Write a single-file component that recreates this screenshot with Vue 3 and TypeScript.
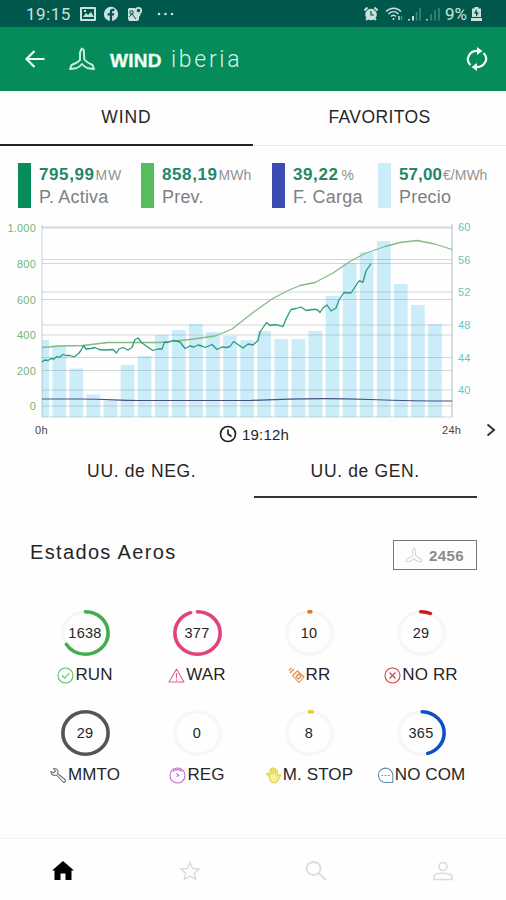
<script setup lang="ts">
interface Metric { value: string; unit: string; label: string; tone: string }
interface State { value: number; label: string; icon: string; color: string; from: number; share: number }

const metrics: Metric[] = [
  { value: '795,99', unit: 'MW', label: 'P. Activa', tone: 'active' },
  { value: '858,19', unit: 'MWh', label: 'Prev.', tone: 'forecast' },
  { value: '39,22', unit: '%', label: 'F. Carga', tone: 'load' },
  { value: '57,00', unit: '€/MWh', label: 'Precio', tone: 'price' },
]

const leftAxis = [
  { y: 228, text: '1.000' }, { y: 263.5, text: '800' }, { y: 299.5, text: '600' },
  { y: 335, text: '400' }, { y: 370.5, text: '200' }, { y: 406, text: '0' },
]
const rightAxis = [
  { y: 227, text: '60' }, { y: 259.5, text: '56' }, { y: 292, text: '52' },
  { y: 325, text: '48' }, { y: 357.5, text: '44' }, { y: 390, text: '40' },
]

const tops = [340, 345, 368.5, 394.5, 401, 365, 356, 335, 330, 324, 332, 336, 340, 331, 339, 339, 331, 296, 263, 252, 241, 284, 305, 324]
const bars = tops.map((y, i) => {
  const x = Math.max(42, 35.3 + i * 17.08)
  return { x, y, w: 49 + i * 17.08 - x, h: 417 - y }
})

// "from" and "share" are percentages of the ring, clockwise from twelve o'clock.
const states: State[] = [
  { value: 1638, label: 'RUN', icon: 'check', color: '#43ae50', from: 0, share: 66 },
  { value: 377, label: 'WAR', icon: 'warning', color: '#e0437c', from: 0, share: 95 },
  { value: 10, label: 'RR', icon: 'remote', color: '#db7422', from: -0.4, share: 1.4 },
  { value: 29, label: 'NO RR', icon: 'cross', color: '#c4201f', from: -0.5, share: 7 },
  { value: 29, label: 'MMTO', icon: 'wrench', color: '#555555', from: 0, share: 100 },
  { value: 0, label: 'REG', icon: 'gauge', color: '#b455c2', from: 0, share: 0 },
  { value: 8, label: 'M. STOP', icon: 'hand', color: '#e3cd29', from: 0, share: 2 },
  { value: 365, label: 'NO COM', icon: 'chat', color: '#0d4fc4', from: 0.5, share: 45 },
]
</script>

<template>
  <main class="screen">
    <div class="status">
      <span class="clock">19:15</span>
      <svg class="st-left" width="82" height="16" viewBox="0 0 82 16">
        <path fill-rule="evenodd" fill="#c9e2dc" d="M1 1h14a1 1 0 0 1 1 1v12a1 1 0 0 1-1 1H1a1 1 0 0 1-1-1V2a1 1 0 0 1 1-1zM2 3v10h12V3zM3 11l3-4 2 2 3-3 3 5zM4 4h2v2H4z" />
        <circle cx="31" cy="8" r="7.2" fill="#c9e2dc" />
        <path fill="#00574b" d="M29.8 15.4V9.6h-2.2V7.3h2.2V5.8c0-2 1.100-3.100 3-3.100h1.600v2.200h-1.200c-.8 0-1.100.4-1.100 1.100v1.300h2.200l-.4 2.300h-1.800v5.800z" />
        <path fill="#c9e2dc" d="M49 2h6l1 4 3 3v5l-2 1h-8l-1-2V3z" />
        <path stroke="#00574b" stroke-width="1" fill="none" d="M49 11l3-3 4 5M50 5h3v3h-3z" />
        <circle cx="58.500" cy="4.500" r="2.700" fill="#00574b" stroke="#c9e2dc" stroke-width="1.800" />
        <path fill="#c9e2dc" d="M56 8h5l-2.500 4z" />
      </svg>
      <svg class="dots" width="18" height="4" viewBox="0 0 18 4"><g fill="#c9e2dc"><circle cx="2" cy="2" r="1.300" /><circle cx="8.500" cy="2" r="1.300" /><circle cx="15" cy="2" r="1.300" /></g></svg>
      <span class="spacer" />
      <svg class="st-right" width="78" height="16" viewBox="0 0 78 16" fill="none" stroke="#c9e2dc">
        <circle cx="8" cy="8.500" r="5.300" fill="#c9e2dc" />
        <path stroke-width="2" d="M1.500 4.500l3-3M14.500 4.500l-3-3M3 14l2-2M13 14l-2-2" />
        <path stroke="#00574b" stroke-width="1.200" d="M8 5v4h3" />
        <path stroke-width="1.500" d="M23 5.500c4.500-4.500 11-4.500 15 0M25.500 8c3-3 7-3 10 0M28 10.500c1.700-1.700 3.300-1.700 5 0" />
        <path stroke-width="1.500" d="M36 10v4M30.500 12v2" />
        <path stroke-width="1.500" opacity=".4" d="M38.500 10v4" />
        <path stroke-width="2" d="M46 13v1.500M50 10v4.500" />
        <path stroke-width="1.500" opacity=".35" d="M53.500 6v8.500M57 2v12.500M68 8v6.500M72 4v10.500M76 2v12.500" />
        <path stroke-width="2" opacity=".8" d="M64 13v1.500" />
      </svg>
      <span class="battery">9%</span>
      <svg width="11" height="14" viewBox="0 0 11 14"><path fill="#c9e2dc" d="M3.500 0h4v1.500H10V10H1V1.500h2.500zM0 11h11v3H0z" /><path fill="#00574b" d="M5.500 2L3 6.500h2V10l3-4.500H6z" /></svg>
    </div>

    <header class="appbar">
      <svg width="22" height="20" viewBox="0 0 22 20" fill="none" stroke="#e9fff4" stroke-width="2.200"><path d="M10.500 2L2.500 10l8 8M2.500 10h18" /></svg>
      <svg class="turbine" width="26" height="24" viewBox="0 0 26 24" fill="none" stroke="#c8f2dd" stroke-width="1.900" stroke-linejoin="round">
        <path d="M11 13V5.500L12.800 1.500l2 1.500.5 9.500c2.500 3 5.800 4.500 8.200 5.500l1.500 4-6-.7c-2.500-.8-4.200-2-6-4.300-1.800 2.300-3.500 3.500-6 4.300L1 22l1.500-4C5 17 8.700 15.500 11 13z" />
      </svg>
      <h1><b>WIND</b><span>iberia</span></h1>
      <span class="spacer" />
      <svg width="22" height="24" viewBox="0 0 22 24" fill="none" stroke="#f2fff8" stroke-width="2.200">
        <path d="M4.500 18A9.300 8.300 0 0 1 12 4M17.500 6A9.300 8.300 0 0 1 10 20" />
        <path fill="#f2fff8" stroke="none" d="M11 0l5.500 4-5.500 4zM11 16l-5.500 4 5.500 4z" />
      </svg>
    </header>

    <nav class="tabs">
      <a class="selected">WIND</a>
      <a>FAVORITOS</a>
    </nav>

    <section class="metrics">
      <div v-for="m in metrics" :key="m.label" class="metric" :class="m.tone">
        <i />
        <div>
          <p class="value"><b>{{ m.value }}</b><small>{{ m.unit }}</small></p>
          <p class="label">{{ m.label }}</p>
        </div>
      </div>
    </section>

    <svg class="chart" width="506" height="204" viewBox="0 217 506 204">
      <rect v-for="(b, i) in bars" :key="i" :x="b.x" :y="b.y" :width="b.w" :height="b.h" fill="#cbedf9" />
      <g stroke="#58666b" stroke-opacity=".25" stroke-width="1.200">
        <line v-for="a in leftAxis" :key="a.text" x1="42" x2="452" :y1="a.y" :y2="a.y" />
        <line v-for="a in rightAxis" :key="a.text" x1="42" x2="452" :y1="a.y" :y2="a.y" />
        <path d="M42 225v192M42 417h410" />
      </g>
      <path d="M452 224v193" stroke="#b7c6ca" stroke-width="1.200" />
      <g class="axis-left"><text v-for="a in leftAxis" :key="a.text" x="36" :y="a.y + 4" text-anchor="end">{{ a.text }}</text></g>
      <g class="axis-right"><text v-for="a in rightAxis" :key="a.text" x="458" :y="a.y + 4">{{ a.text }}</text></g>
      <g fill="none" stroke-linejoin="round">
        <path stroke="#4a4f7c" stroke-width="1.200" d="M42 399H80C110 399 115 400.500 140 400.500H250C280 399 330 398 370 399.500C400 400.500 420 401 452 401" />
        <path stroke="#83bb83" stroke-width="1.300" d="M42 347.500L60 346L83 345.500L108 342.500H160L190 339.500L215 336L224 332.500L232 329L253 312.500L272 299L286 291.500L300 285.500L315 282.500L333 273L350 261.500L365 253.500L385 246.500L400 242.500L417 240.500L435 244L452 249.500" />
        <path stroke="#2b9a80" stroke-width="1.300" d="M42 362L44.500 360L48 360.500L51 358.500L54 359L57 356.500L59 357.500L63 354.500L66 355.500L70 355.500L74 357L78 354L81 350.500L83.500 345.500L86 349L91 348.500L95 347.500L99 349.500L105 350L113 349.500L116.500 353L119 349L123 347.500L128 350L132 347.500L135 339.500L138 338L142 343L145 345L149 348L153 350.500L158 349L162 349L164.500 342L168 342.500L173 340.500L180 342L185 348.500L190 346L194 347L198 345L202 346L205 347.500L212 344.500L217 349.500L222 347L226 347.500L230 346.500L233.500 341.500L238 344.500L243 348L248 344L253 345L258 340.500L260 332L266.500 322.500L270 325.500L276 324.500L283 326.500L286.500 318L291 309.500L296 308.500L301 307L306 310.500L312 309.500L317 309.500L320 312.500L323 308L327 305L331 311L336 308L339 300L344 292.500L351 293L355 287L359 281L363 282L366 271L368 268L371 263.500" />
      </g>
    </svg>

    <div class="timebar">
      <span class="hour">0h</span>
      <span class="now">
        <svg width="18" height="18" viewBox="0 0 18 18" fill="none" stroke="#222" stroke-width="1.700"><circle cx="9" cy="9" r="7.500" /><path d="M9 4.500V9l3.500 2.500" /></svg>
        19:12h
      </span>
      <span class="hour last">24h</span>
      <svg class="next" width="10" height="14" viewBox="0 0 10 14" fill="none" stroke="#333" stroke-width="2"><path d="M1.500 1.500L8 7l-6.500 5.500" /></svg>
    </div>

    <nav class="subtabs">
      <a>UU. de NEG.</a>
      <a class="selected">UU. de GEN.</a>
    </nav>

    <section class="heading">
      <h2>Estados Aeros</h2>
      <div class="total">
        <svg width="18" height="16" viewBox="0 0 26 24" fill="none" stroke="#d4d4d4" stroke-width="1.600" stroke-linejoin="round">
          <path d="M11 13V5.500L12.800 1.500l2 1.500.5 9.500c2.500 3 5.800 4.500 8.200 5.500l1.500 4-6-.7c-2.500-.8-4.200-2-6-4.300-1.800 2.300-3.500 3.500-6 4.300L1 22l1.500-4C5 17 8.700 15.500 11 13z" />
        </svg>
        <span>2456</span>
      </div>
    </section>

    <section class="states">
      <div v-for="s in states" :key="s.label" class="state">
        <div class="dial">
          <svg width="51" height="48" viewBox="0 0 48 48" preserveAspectRatio="none" fill="none" stroke-width="3.400">
            <circle cx="24" cy="24" r="21.300" stroke="#f7f7f7" />
            <circle v-if="s.share" cx="24" cy="24" r="21.300" :stroke="s.color" stroke-linecap="round" pathLength="100" :stroke-dasharray="`${s.share} 100`" :transform="`rotate(${s.from * 3.6 - 90} 24 24)`" />
          </svg>
          <span>{{ s.value }}</span>
        </div>
        <div class="name">
          <svg width="17" height="17" viewBox="0 0 17 17" fill="none" :stroke="s.color" stroke-opacity=".85" stroke-width="1.100" stroke-linejoin="round">
            <template v-if="s.icon === 'check'"><circle cx="8.500" cy="8.500" r="7.500" /><path d="M5 8.500l2.700 2.700L12.500 6" /></template>
            <template v-else-if="s.icon === 'warning'"><path d="M8.500 2L16 15H1zM8.500 6v5.500M8.500 12.500v1.300" /></template>
            <template v-else-if="s.icon === 'remote'"><path d="M4.500 8.500l5-4.500 6.500 6-5 5.500zM1 3.500l2.500-2.500M2 6l4-4M8 9.500l2.500-2.500 2.500 2.500-2.500 2.500zM10.500 12l2.500-2.500" /></template>
            <template v-else-if="s.icon === 'cross'"><circle cx="8.500" cy="8.500" r="7.500" /><path d="M5.500 5.500l6 6M11.500 5.500l-6 6" /></template>
            <template v-else-if="s.icon === 'wrench'"><path d="M3.500 1.500l3 .5 1.500 2-.5 2.500 7.500 6c1.500 1.500-.5 3.500-2 2.500L6.500 8 4 8.500 1.500 7 1 4.500l2.500 1.300L5.500 4z" /></template>
            <template v-else-if="s.icon === 'gauge'"><circle cx="8.500" cy="8.500" r="7.500" /><path d="M4 4.500c2-2.500 7-2.500 9 0M7.500 6.500l2.500 2-2.500 1" /></template>
            <template v-else-if="s.icon === 'hand'"><path fill="#f7ee9a" d="M4.500 10L2 7.500C1 6.500 2.500 5.500 3.500 6.500L5 8V3c0-1.500 1.700-1.500 1.700 0v3.500V2c0-1.500 1.900-1.500 1.900 0v4.500V2.500c0-1.500 1.900-1.500 1.900 0V7 4c0-1.500 1.800-1.500 1.800 0v5c1-1.500 3-2 3.200-.8-1.500 4-3 7.800-6.500 7.800-3.500 0-4.500-3-4.500-6z" /></template>
            <template v-else><path stroke="#467aa6" d="M15.800 15.500H8.500a7.200 7.200 0 1 1 7.300-7zM4.500 8.500h1.700M7.700 8.500h1.700M10.900 8.500h1.700" /></template>
          </svg>
          <span>{{ s.label }}</span>
        </div>
      </div>
    </section>

    <footer class="bottom">
      <svg width="24" height="22" viewBox="0 0 24 22"><path fill="#000" d="M12 1l11 9.500h-2.500V20h-6v-6.500h-5V20h-6v-9.500H1z" /></svg>
      <svg width="22" height="20" viewBox="0 0 22 20" fill="none" stroke="#dcdcdc" stroke-width="1.500"><path d="M11 1.500l2.600 6 6.700.5-5.100 4.300 1.600 6.200L11 15.200l-5.800 3.300 1.600-6.200L1.700 8l6.700-.5z" /></svg>
      <svg width="22" height="20" viewBox="0 0 22 20" fill="none" stroke="#dcdcdc" stroke-width="1.900"><ellipse cx="8.500" cy="7.500" rx="7" ry="6.500" /><path d="M13.500 12l7.500 7" /></svg>
      <svg width="22" height="20" viewBox="0 0 22 20" fill="none" stroke="#dcdcdc" stroke-width="1.700"><circle cx="11" cy="5.500" r="4" /><path d="M1.800 18.500v-2.500c0-5 18.400-5 18.400 0v2.500z" /></svg>
    </footer>
  </main>
</template>

<style>
body { margin: 0; background: #fff; }
</style>

<style scoped>
.screen { width: 506px; height: 900px; display: flex; flex-direction: column; overflow: hidden; background: #fefefe; color: #262626; font-family: "Liberation Sans", Arial, sans-serif; }
h1, h2, p { margin: 0; font-weight: 400; }
svg { display: block; flex: none; }
.spacer { flex: 1; }

.status { height: 27px; flex: none; box-sizing: border-box; padding: 1px 24px 0 26px; display: flex; align-items: center; background: #00574b; color: #c9e2dc; font-family: Roboto, sans-serif; font-size: 17px; }
.clock { width: 54px; letter-spacing: .5px; }
.dots { margin-left: -5px; }
.st-right { margin-right: 1px; }
.battery { width: 26px; margin-left: 3px; }

.appbar { height: 63.500px; flex: none; box-sizing: border-box; padding: 0 18px 0 24px; display: flex; align-items: center; background: #058c5a; color: #e9fff4; }
.turbine { margin: 0 15px 0 23px; }
.appbar h1 { display: flex; align-items: baseline; padding-top: 1px; }
.appbar b { font-size: 19px; width: 61px; letter-spacing: .3px; -webkit-text-stroke: .4px #e9fff4; }
.appbar h1 span { font-family: Roboto, sans-serif; font-weight: 300; font-size: 23px; letter-spacing: 2.700px; color: #d0f5e3; }

.tabs { height: 55.500px; flex: none; display: flex; }
.tabs a { flex: 1; display: flex; align-items: center; justify-content: center; box-sizing: border-box; border-bottom: 1px solid #e8e8e8; font-size: 17.500px; letter-spacing: .9px; }
.tabs a:last-child { letter-spacing: .4px; }
.tabs a.selected { border-bottom: 2.500px solid #222; }

.metrics { height: 71px; flex: none; box-sizing: border-box; padding: 17px 0 0 18px; display: grid; grid-template-columns: 123px 131px 106px 1fr; }
.metric { display: flex; gap: 9px; white-space: nowrap; }
.metric i { width: 12.500px; height: 45px; margin-right: -.5px; }
.active i { background: #088c5b; }
.forecast i { background: #56bd5d; }
.load i { background: #3b4cb3; }
.price i { background: #cbedf9; }
.value { height: 23px; line-height: 23px; }
.value b { font-size: 17px; color: #23866b; font-weight: 700; letter-spacing: .6px; }
.value small { margin-left: 1px; font-size: 14px; color: #929292; }
.active small { letter-spacing: .8px; }
.load small { margin-left: 3px; }
.price b { letter-spacing: .1px; }
.label { height: 22px; line-height: 22px; font-size: 18px; letter-spacing: .2px; color: #808080; }

.chart { font-size: 11px; }
.axis-left { fill: #74b577; letter-spacing: .2px; }
.axis-right { fill: #6dbfc8; letter-spacing: .2px; }

.timebar { height: 32px; flex: none; display: grid; grid-template-columns: 35px 184px 223px 44px 20px; box-sizing: border-box; padding-top: 2px; align-items: start; }
.hour { grid-column: 2; font-size: 11px; line-height: 15px; letter-spacing: .3px; color: #444; }
.now { grid-column: 3; display: flex; align-items: center; gap: 5px; padding-top: 2px; font-size: 15px; letter-spacing: .2px; }
.hour.last { grid-column: 4; }
.next { grid-column: 5; }

.subtabs { height: 45px; flex: none; margin: 0 29px 0 30px; display: flex; }
.subtabs a { flex: 1; height: 45px; box-sizing: border-box; padding-top: 8px; text-align: center; font-size: 17.500px; line-height: 21px; letter-spacing: .65px; border-bottom: 1px solid #fafafa; }
.subtabs a.selected { border-bottom: 2.500px solid #333; }

.heading { height: 111px; flex: none; box-sizing: border-box; padding: 42px 29px 0 30px; display: flex; justify-content: space-between; align-items: flex-start; }
.heading h2 { font-size: 20px; line-height: 25px; letter-spacing: 1.350px; }
.total { width: 84px; height: 30px; box-sizing: border-box; border: 1px solid #777; display: flex; align-items: center; gap: 6px; padding-left: 11px; color: #8b8b8b; font-size: 15px; font-weight: 700; letter-spacing: .4px; }

.states { height: 229px; flex: none; padding-left: 29px; display: grid; grid-template-columns: repeat(4, 112px); grid-auto-rows: 100px; }
.state { display: flex; flex-direction: column; align-items: center; }
.dial { display: grid; place-items: center; }
.dial > * { grid-area: 1 / 1; }
.dial span { font-size: 14.500px; letter-spacing: .3px; }
.name { display: flex; align-items: center; margin-top: 8px; gap: 1px; font-size: 17px; line-height: 20px; letter-spacing: .1px; white-space: nowrap; }

.bottom { flex: 1; border-top: 1px solid #f4f4f4; display: grid; grid-template-columns: repeat(4, 1fr); align-items: center; justify-items: center; padding-top: 3px; }
</style>
